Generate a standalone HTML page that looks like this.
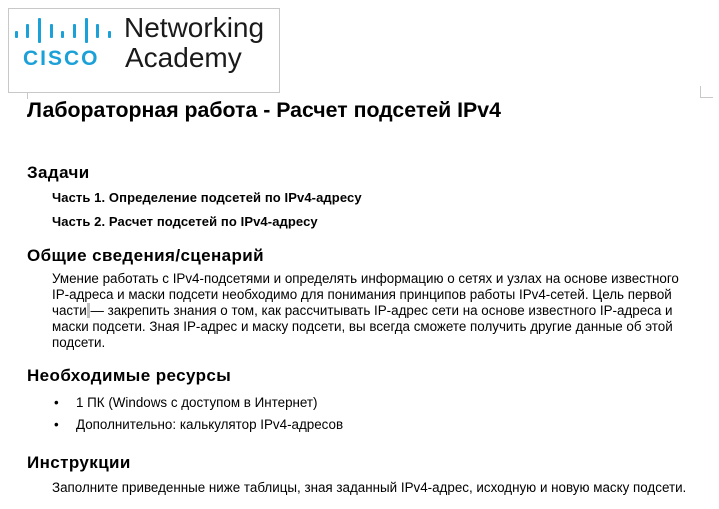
<!DOCTYPE html>
<html><head><meta charset="utf-8"><style>
body{margin:0;width:719px;height:509px;background:#fff;position:relative;overflow:hidden;font-family:"Liberation Sans","DejaVu Sans",sans-serif;color:#000}
.a{position:absolute;white-space:nowrap}
.h{font-size:17px;font-weight:bold;line-height:19px;left:27px;letter-spacing:0.4px}
.p{font-size:13px;font-weight:bold;line-height:15px;left:52px;letter-spacing:0.1px}
.b{font-size:13.4px;line-height:16px;left:52px}
.bar{position:absolute;width:3px;background:#1ba0d7;border-radius:1px}
</style></head><body>
<div class="a" style="left:8px;top:8px;width:270px;height:83px;border:1px solid #c8c8c8"></div>
<div class="a" style="left:14px;top:92px;width:13px;height:7px;border-right:1px solid #c8c8c8"></div>
<div class="a" style="left:700px;top:86px;width:12px;height:11px;border-left:1px solid #c8c8c8;border-bottom:1px solid #c8c8c8"></div>
<div class="bar" style="left:15px;top:31px;height:7px"></div>
<div class="bar" style="left:26px;top:24px;height:14px"></div>
<div class="bar" style="left:38px;top:18px;height:25px"></div>
<div class="bar" style="left:50px;top:24px;height:14px"></div>
<div class="bar" style="left:61px;top:31px;height:7px"></div>
<div class="bar" style="left:73px;top:24px;height:14px"></div>
<div class="bar" style="left:85px;top:18px;height:25px"></div>
<div class="bar" style="left:96px;top:24px;height:14px"></div>
<div class="bar" style="left:108px;top:31px;height:7px"></div>
<div class="a" style="left:23px;top:47px;font-size:21px;font-weight:bold;color:#1ba0d7;letter-spacing:2px;line-height:24px">CISCO</div>
<div class="a" style="left:124px;top:12px;font-size:28px;line-height:32px;color:#1a1a1a">Networking</div>
<div class="a" style="left:125px;top:42px;font-size:28px;line-height:32px;color:#1a1a1a">Academy</div>
<div class="a" style="left:27px;top:99px;font-size:21.3px;font-weight:bold;line-height:23px">Лабораторная работа - Расчет подсетей IPv4</div>
<div class="a h" style="top:163px">Задачи</div>
<div class="a p" style="top:190px">Часть 1. Определение подсетей по IPv4-адресу</div>
<div class="a p" style="top:214px">Часть 2. Расчет подсетей по IPv4-адресу</div>
<div class="a h" style="top:246px">Общие сведения/сценарий</div>
<div class="a b" style="top:271px">Умение работать с IPv4-подсетями и определять информацию о сетях и узлах на основе известного</div>
<div class="a b" style="top:287px">IP-адреса и маски подсети необходимо для понимания принципов работы IPv4-сетей. Цель первой</div>
<div class="a b" style="top:303px">части<span style="background:#c0c0c0"> </span>— закрепить знания о том, как рассчитывать IP-адрес сети на основе известного IP-адреса и</div>
<div class="a b" style="top:319px">маски подсети. Зная IP-адрес и маску подсети, вы всегда сможете получить другие данные об этой</div>
<div class="a b" style="top:335px">подсети.</div>
<div class="a h" style="top:366px">Необходимые ресурсы</div>
<div class="a b" style="top:395px;left:54px">•</div>
<div class="a b" style="top:395px;left:76px">1 ПК (Windows с доступом в Интернет)</div>
<div class="a b" style="top:417px;left:54px">•</div>
<div class="a b" style="top:417px;left:76px">Дополнительно: калькулятор IPv4-адресов</div>
<div class="a h" style="top:453px">Инструкции</div>
<div class="a b" style="top:480px">Заполните приведенные ниже таблицы, зная заданный IPv4-адрес, исходную и новую маску подсети.</div>
</body></html>
